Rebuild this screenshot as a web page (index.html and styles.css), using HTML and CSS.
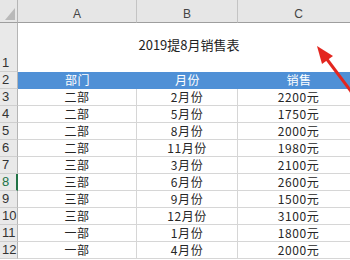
FILE: index.html
```html
<!DOCTYPE html>
<html>
<head>
<meta charset="utf-8">
<link rel="stylesheet" href="styles.css">
</head>
<body>
<div class="sheet">
  <div class="corner"><span class="tri"></span></div>
  <div class="colhead">A</div>
  <div class="colhead">B</div>
  <div class="colhead">C</div>

  <div class="rowhead">1</div>
  <div class="title">2019提8月销售表</div>

  <div class="rowhead">2</div>
  <div class="hcell">部门</div>
  <div class="hcell">月份</div>
  <div class="hcell">销售</div>

  <div class="rowhead">3</div><div class="cell">二部</div><div class="cell">2月份</div><div class="cell">2200元</div>
  <div class="rowhead">4</div><div class="cell">二部</div><div class="cell">5月份</div><div class="cell">1750元</div>
  <div class="rowhead">5</div><div class="cell">二部</div><div class="cell">8月份</div><div class="cell">2000元</div>
  <div class="rowhead">6</div><div class="cell">二部</div><div class="cell">11月份</div><div class="cell">1980元</div>
  <div class="rowhead">7</div><div class="cell">三部</div><div class="cell">3月份</div><div class="cell">2100元</div>
  <div class="rowhead active">8</div><div class="cell">三部</div><div class="cell">6月份</div><div class="cell">2600元</div>
  <div class="rowhead">9</div><div class="cell">三部</div><div class="cell">9月份</div><div class="cell">1500元</div>
  <div class="rowhead">10</div><div class="cell">三部</div><div class="cell">12月份</div><div class="cell">3100元</div>
  <div class="rowhead">11</div><div class="cell">一部</div><div class="cell">1月份</div><div class="cell">1800元</div>
  <div class="rowhead">12</div><div class="cell">一部</div><div class="cell">4月份</div><div class="cell">2000元</div>
</div>
<svg class="arrow" width="350" height="260" viewBox="0 0 350 260">
  <line x1="362" y1="106" x2="326" y2="58" stroke="#e3261f" stroke-width="3"/>
  <polygon points="317,46 333,56 322,64" fill="#e3261f"/>
</svg>
</body>
</html>
```
FILE: styles.css
```css
html, body {
  margin: 0;
  padding: 0;
  background: #ffffff;
  overflow: hidden;
}
body {
  width: 350px;
  height: 260px;
  position: relative;
  font-family: "Noto Sans CJK SC", "Liberation Sans", sans-serif;
  font-size: 12px;
  color: #262626;
}
.sheet {
  display: grid;
  grid-template-columns: 18px 119px 101px 122px;
  grid-template-rows: 23px 49px 17px repeat(10, 17px);
  width: 360px;
}
.sheet > div {
  box-sizing: border-box;
  line-height: 16px;
  white-space: nowrap;
}
.corner {
  background: #e6e6e6;
  border-right: 1px solid #b5b5b5;
  border-bottom: 1px solid #9e9e9e;
  position: relative;
}
.tri {
  position: absolute;
  right: 2px;
  bottom: 2px;
  width: 0;
  height: 0;
  border-left: 10px solid transparent;
  border-bottom: 12px solid #b9b9b9;
}
.colhead {
  background: #e6e6e6;
  border-right: 1px solid #c4c4c4;
  border-bottom: 1px solid #9e9e9e;
  text-align: center;
  padding-top: 6px;
  color: #444444;
  font-family: "Liberation Sans", sans-serif;
  font-size: 12px;
}
.rowhead {
  background: #e9e9e9;
  border-right: 1px solid #b5b5b5;
  border-bottom: 1px solid #cfcfcf;
  font-family: "Liberation Sans", sans-serif;
  font-size: 13px;
  color: #333333;
  padding-left: 2px;
  display: flex;
  align-items: flex-end;
}
.rowhead.active {
  color: #217346;
  border-right: 2px solid #217346;
}
.title {
  grid-column: span 3;
  text-align: center;
  padding-top: 14px;
  font-size: 13px;
  color: #222222;
}
.hcell {
  background: #4f90d6;
  color: #ffffff;
  text-align: center;
  font-size: 12px;
  letter-spacing: 0.6px;
}
.cell {
  border-right: 1px solid #d6d6d6;
  border-bottom: 1px solid #d6d6d6;
  text-align: center;
  font-size: 12px;
  letter-spacing: 0.6px;
}
.arrow {
  position: absolute;
  left: 0;
  top: 0;
  pointer-events: none;
}
```
